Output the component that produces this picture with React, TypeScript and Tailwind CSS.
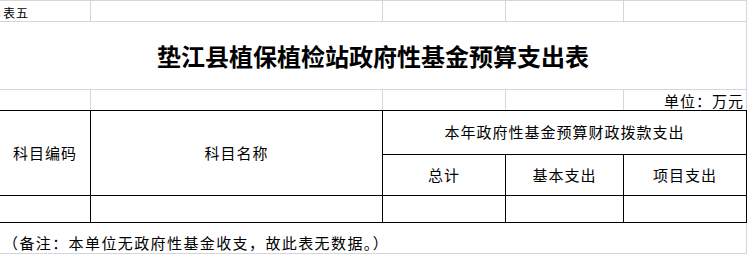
const grid = "border-[#d2d6e0]"

export default function App() {
  return (
    <div className="w-[747px] h-[255px] bg-white text-black font-['Noto_Sans_CJK_SC','Noto_Sans',sans-serif]">
      {/* 表五 */}
      <div className={`flex h-[22px] border-t border-b ${grid}`}>
        <div className={`w-[91px] border-r ${grid} flex items-end pl-[3px] text-[12px] leading-[16px] tracking-[1px]`}>
          表五
        </div>
        <div className={`w-[292px] border-r ${grid}`} />
        <div className={`w-[123px] border-r ${grid}`} />
        <div className={`w-[118px] border-r ${grid}`} />
        <div className={`w-[123px] border-r ${grid}`} />
      </div>

      {/* title */}
      <div className={`h-[68px] border-b border-r ${grid} flex items-center justify-center`}>
        <h1 className="text-[24px] font-bold leading-[30px]">垫江县植保植检站政府性基金预算支出表</h1>
      </div>

      {/* unit */}
      <div className="flex h-[21px] border-b border-black">
        <div className={`w-[91px] border-r ${grid}`} />
        <div className={`w-[292px] border-r ${grid}`} />
        <div className={`w-[123px] border-r ${grid}`} />
        <div className={`w-[118px] border-r ${grid}`} />
        <div className={`w-[123px] border-r ${grid} flex items-end justify-end pr-[2px] text-[15px] leading-[18px] tracking-[1px]`}>
          单位：万元
        </div>
      </div>

      {/* header */}
      <div className="flex h-[85px] border-b border-black text-[15px] tracking-[1px]">
        <div className="w-[91px] border-r border-black flex items-center justify-center">科目编码</div>
        <div className="w-[292px] border-r border-black flex items-center justify-center">科目名称</div>
        <div className="w-[364px] flex flex-col">
          <div className="h-[44px] border-b border-r border-black flex items-center justify-center">
            本年政府性基金预算财政拨款支出
          </div>
          <div className="flex flex-1">
            <div className="w-[123px] border-r border-black flex items-center justify-center">总计</div>
            <div className="w-[118px] border-r border-black flex items-center justify-center">基本支出</div>
            <div className="w-[123px] border-r border-black flex items-center justify-center">项目支出</div>
          </div>
        </div>
      </div>

      {/* empty data row */}
      <div className="flex h-[27px] border-b border-black">
        <div className="w-[91px] border-r border-black" />
        <div className="w-[292px] border-r border-black" />
        <div className="w-[123px] border-r border-black" />
        <div className="w-[118px] border-r border-black" />
        <div className="w-[123px] border-r border-black" />
      </div>

      {/* note */}
      <div className={`h-[31px] border-b border-r ${grid} flex items-end pl-[3px] text-[15px] leading-[20px] tracking-[1.4px]`}>
        （备注：本单位无政府性基金收支，故此表无数据。）
      </div>
    </div>
  )
}
